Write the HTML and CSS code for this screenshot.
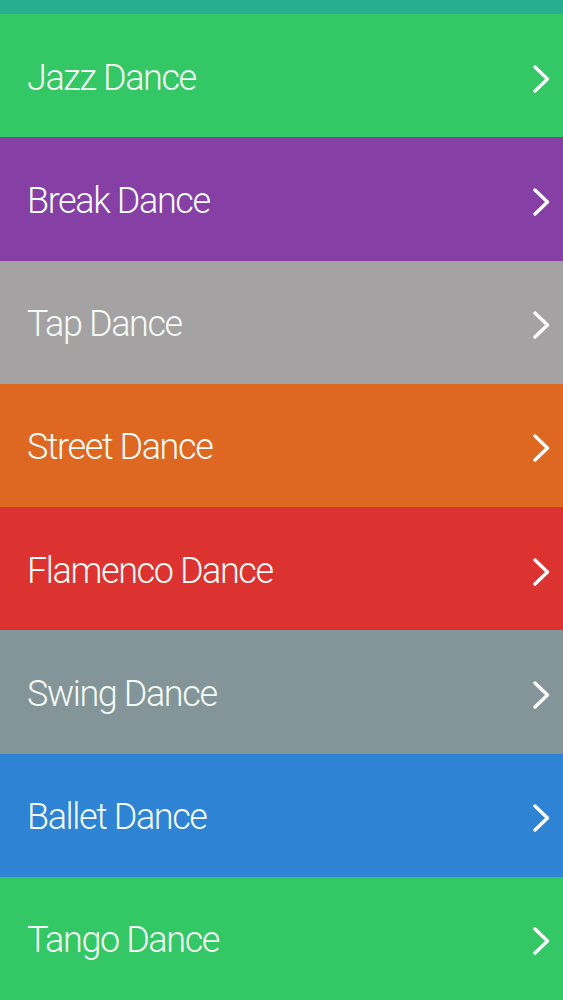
FILE: index.html
```html
<!DOCTYPE html>
<html>
<head>
<meta charset="utf-8">
<link rel="stylesheet" href="styles.css">
</head>
<body>
<div class="list">
  <div class="row teal"></div>
  <div class="row green"><span class="label">Jazz Dance</span><svg class="chev" viewBox="0 0 18 28" width="18" height="28"><path d="M3 2 L15.5 14 L3 26"/></svg></div>
  <div class="row purple"><span class="label">Break Dance</span><svg class="chev" viewBox="0 0 18 28" width="18" height="28"><path d="M3 2 L15.5 14 L3 26"/></svg></div>
  <div class="row gray"><span class="label">Tap Dance</span><svg class="chev" viewBox="0 0 18 28" width="18" height="28"><path d="M3 2 L15.5 14 L3 26"/></svg></div>
  <div class="row orange"><span class="label">Street Dance</span><svg class="chev" viewBox="0 0 18 28" width="18" height="28"><path d="M3 2 L15.5 14 L3 26"/></svg></div>
  <div class="row red"><span class="label">Flamenco Dance</span><svg class="chev" viewBox="0 0 18 28" width="18" height="28"><path d="M3 2 L15.5 14 L3 26"/></svg></div>
  <div class="row slate"><span class="label">Swing Dance</span><svg class="chev" viewBox="0 0 18 28" width="18" height="28"><path d="M3 2 L15.5 14 L3 26"/></svg></div>
  <div class="row blue"><span class="label">Ballet Dance</span><svg class="chev" viewBox="0 0 18 28" width="18" height="28"><path d="M3 2 L15.5 14 L3 26"/></svg></div>
  <div class="row green"><span class="label">Tango Dance</span><svg class="chev" viewBox="0 0 18 28" width="18" height="28"><path d="M3 2 L15.5 14 L3 26"/></svg></div>
</div>
</body>
</html>
```

FILE: styles.css
```css
html, body {
  margin: 0;
  padding: 0;
  height: 100%;
  overflow: hidden;
  background: #ffffff;
}
.list {
  display: flex;
  flex-direction: column;
  height: 1000px;
}
.row {
  flex: 0 0 123.25px;
  height: 123.25px;
  display: flex;
  align-items: center;
  justify-content: space-between;
  padding: 0 13px 0 27px;
  box-sizing: border-box;
}
.row.teal {
  flex: 0 0 14px;
  height: 14px;
}
.label {
  font-family: Roboto, "Noto Sans", sans-serif;
  font-weight: 300;
  font-size: 36px;
  letter-spacing: -1.4px;
  color: #f4fbf6;
  line-height: 1;
  padding-top: 4px;
}
.chev {
  margin-top: 6px;
}
.chev path {
  fill: none;
  stroke: #ffffff;
  stroke-width: 3.4;
  stroke-linecap: round;
  stroke-linejoin: round;
}
.teal { background: #26ae8f; }
.green { background: #34c765; }
.purple { background: #853fa5; }
.gray { background: #a4a2a2; }
.orange { background: #de6722; }
.red { background: #dd3330; }
.slate { background: #849599; }
.blue { background: #2e83d4; }
```
